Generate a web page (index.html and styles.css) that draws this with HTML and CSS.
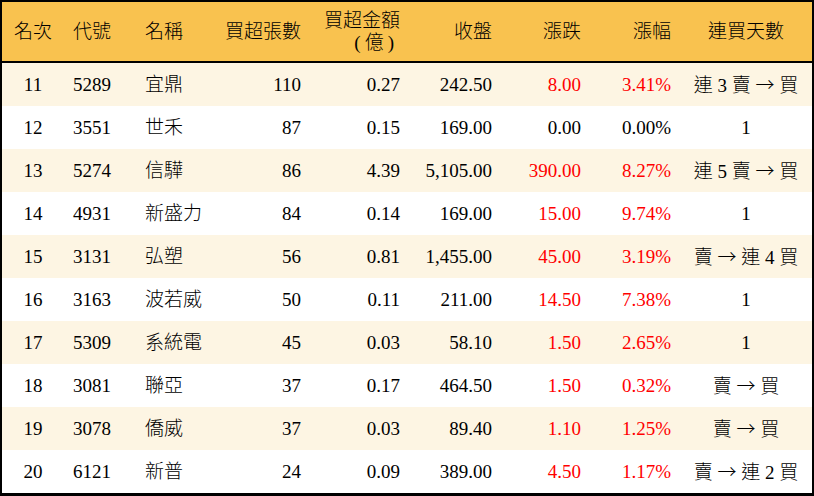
FILE: index.html
```html
<!DOCTYPE html>
<html lang="zh-Hant">
<head>
<meta charset="utf-8">
<title>買超排行</title>
<link rel="stylesheet" href="styles.css">
</head>
<body>
<div class="board">
  <div class="row head">
    <div class="c c1">名次</div>
    <div class="c c2">代號</div>
    <div class="c c3">名稱</div>
    <div class="c c4">買超張數</div>
    <div class="c c5 two"><span>買超金額</span><span class="paren">(億)</span></div>
    <div class="c c6">收盤</div>
    <div class="c c7">漲跌</div>
    <div class="c c8">漲幅</div>
    <div class="c c9">連買天數</div>
  </div>
  <div class="row alt">
    <div class="c c1">11</div><div class="c c2">5289</div><div class="c c3">宜鼎</div><div class="c c4">110</div><div class="c c5">0.27</div><div class="c c6">242.50</div><div class="c c7 up">8.00</div><div class="c c8 up">3.41%</div><div class="c c9">連 3 賣 <span class="cjk">→</span> 買</div>
  </div>
  <div class="row">
    <div class="c c1">12</div><div class="c c2">3551</div><div class="c c3">世禾</div><div class="c c4">87</div><div class="c c5">0.15</div><div class="c c6">169.00</div><div class="c c7">0.00</div><div class="c c8">0.00%</div><div class="c c9">1</div>
  </div>
  <div class="row alt">
    <div class="c c1">13</div><div class="c c2">5274</div><div class="c c3">信驊</div><div class="c c4">86</div><div class="c c5">4.39</div><div class="c c6">5,105.00</div><div class="c c7 up">390.00</div><div class="c c8 up">8.27%</div><div class="c c9">連 5 賣 <span class="cjk">→</span> 買</div>
  </div>
  <div class="row">
    <div class="c c1">14</div><div class="c c2">4931</div><div class="c c3">新盛力</div><div class="c c4">84</div><div class="c c5">0.14</div><div class="c c6">169.00</div><div class="c c7 up">15.00</div><div class="c c8 up">9.74%</div><div class="c c9">1</div>
  </div>
  <div class="row alt">
    <div class="c c1">15</div><div class="c c2">3131</div><div class="c c3">弘塑</div><div class="c c4">56</div><div class="c c5">0.81</div><div class="c c6">1,455.00</div><div class="c c7 up">45.00</div><div class="c c8 up">3.19%</div><div class="c c9">賣 <span class="cjk">→</span> 連 4 買</div>
  </div>
  <div class="row">
    <div class="c c1">16</div><div class="c c2">3163</div><div class="c c3">波若威</div><div class="c c4">50</div><div class="c c5">0.11</div><div class="c c6">211.00</div><div class="c c7 up">14.50</div><div class="c c8 up">7.38%</div><div class="c c9">1</div>
  </div>
  <div class="row alt">
    <div class="c c1">17</div><div class="c c2">5309</div><div class="c c3">系統電</div><div class="c c4">45</div><div class="c c5">0.03</div><div class="c c6">58.10</div><div class="c c7 up">1.50</div><div class="c c8 up">2.65%</div><div class="c c9">1</div>
  </div>
  <div class="row">
    <div class="c c1">18</div><div class="c c2">3081</div><div class="c c3">聯亞</div><div class="c c4">37</div><div class="c c5">0.17</div><div class="c c6">464.50</div><div class="c c7 up">1.50</div><div class="c c8 up">0.32%</div><div class="c c9">賣 <span class="cjk">→</span> 買</div>
  </div>
  <div class="row alt">
    <div class="c c1">19</div><div class="c c2">3078</div><div class="c c3">僑威</div><div class="c c4">37</div><div class="c c5">0.03</div><div class="c c6">89.40</div><div class="c c7 up">1.10</div><div class="c c8 up">1.25%</div><div class="c c9">賣 <span class="cjk">→</span> 買</div>
  </div>
  <div class="row">
    <div class="c c1">20</div><div class="c c2">6121</div><div class="c c3">新普</div><div class="c c4">24</div><div class="c c5">0.09</div><div class="c c6">389.00</div><div class="c c7 up">4.50</div><div class="c c8 up">1.17%</div><div class="c c9">賣 <span class="cjk">→</span> 連 2 買</div>
  </div>
</div>
</body>
</html>
```

FILE: styles.css
```css
html, body {
  margin: 0;
  padding: 0;
  background: #ffffff;
}

.board {
  box-sizing: border-box;
  width: 814px;
  height: 496px;
  border: 2px solid #000;
  border-bottom-width: 3px;
  font-family: "Liberation Serif", "Noto Sans CJK TC", serif;
  font-size: 19px;
  font-weight: 300;
  color: #000;
  overflow: hidden;
}

.cjk {
  font-family: "Noto Sans CJK TC", sans-serif;
  font-weight: 300;
}

.paren {
  letter-spacing: 4px;
  padding-right: 2px;
}

.row {
  display: grid;
  grid-template-columns: 62px 73px 73px 101px 99px 92px 89px 90px 131px;
  height: 43px;
  align-items: center;
  background: #ffffff;
}

.row.alt {
  background: #fdf5e3;
}

.row.head {
  height: 59px;
  background: #f9c24f;
  border-bottom: 2px solid #000;
}

.c {
  white-space: nowrap;
  line-height: 22px;
}

.c1 { text-align: center; }
.c2 { text-align: left; padding-left: 9px; }
.c3 { text-align: left; padding-left: 8px; }
.c4 { text-align: right; padding-right: 10px; }
.c5 { text-align: right; padding-right: 10px; }
.c6 { text-align: right; padding-right: 10px; }
.c7 { text-align: right; padding-right: 10px; }
.c8 { text-align: right; padding-right: 10px; }
.c9 { text-align: center; padding-right: 1px; }

.two {
  display: flex;
  flex-direction: column;
  align-items: flex-end;
  line-height: 22px;
  padding-top: 1px;
}

.up {
  color: #ff0000;
}
```
